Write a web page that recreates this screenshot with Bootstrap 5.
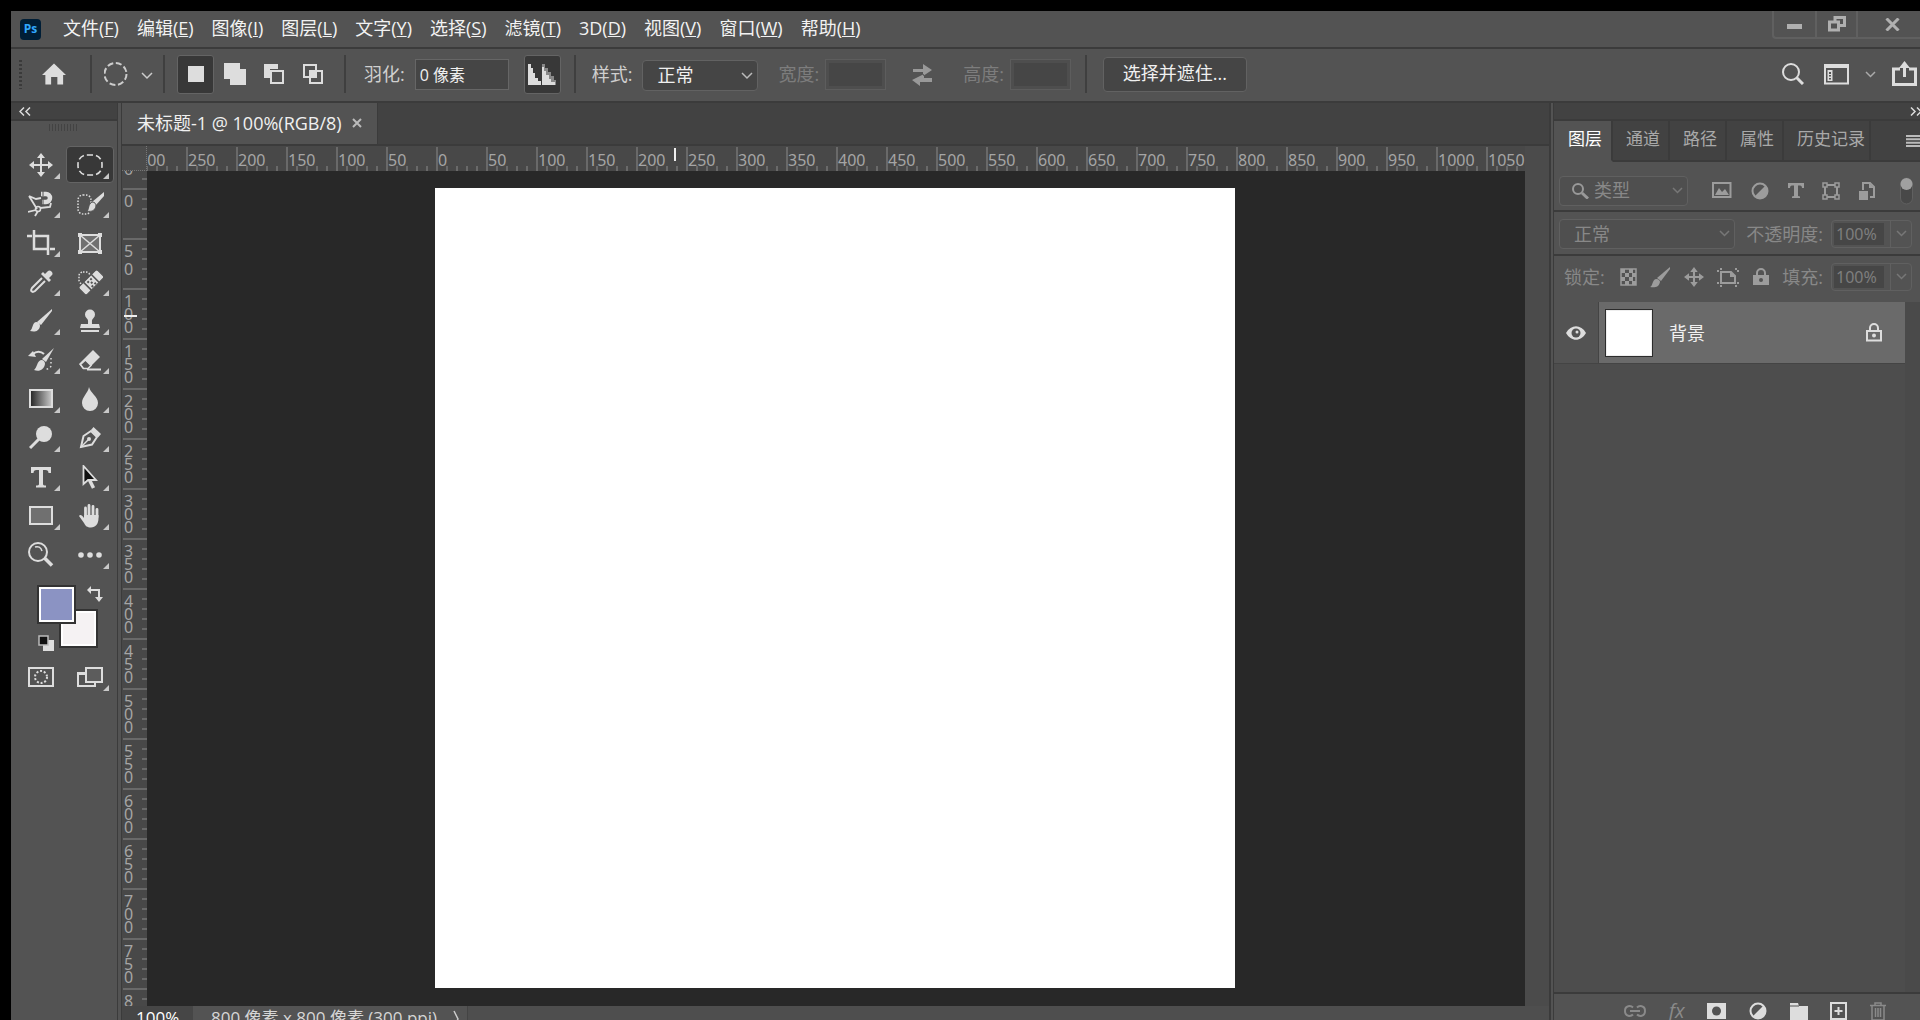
<!DOCTYPE html>
<html lang="zh-CN">
<head>
<meta charset="utf-8">
<meta name="viewport" content="width=device-width, initial-scale=1">
<title>未标题-1 @ 100%(RGB/8)</title>
<link href="https://cdn.jsdelivr.net/npm/bootstrap@5.3.0/dist/css/bootstrap.min.css" rel="stylesheet">
<script src="https://cdn.jsdelivr.net/npm/bootstrap@5.3.0/dist/js/bootstrap.bundle.min.js"></script>
<style>
:root{--panel:#535353;--well:#424242;--line:#3b3b3b;--edge:#666;--ink:#ddd;--dim:#888}
body{background:#000;color:#f0f0f0;font-family:"Open Sans","Noto Sans CJK SC",sans-serif;font-size:18px;line-height:24px;overflow:hidden}
svg{display:block;flex:none;fill:none;stroke:none}
button,input,select{font:inherit;color:inherit}
.tap{background:none;border:0;padding:0;display:flex;align-items:center;justify-content:center;color:inherit}
.app{height:calc(100vh + 12px);padding:11px 0 0 11px}
.shell{background:var(--panel)}
.menubar{height:38px;flex:none;border-bottom:2px solid var(--line)}
.menubar a{color:#f2f2f2;text-decoration:none;padding:0}
.menubar nav{gap:18px;margin-left:22px;padding-bottom:2px}
.pslogo{width:21px;height:21px;border-radius:4px;background:#001e36;color:#31a8ff;font:700 12px/20px "Open Sans",sans-serif;text-align:center;margin-left:9px}
.winbox{height:28px;border:2px solid #606060;border-width:0 0 2px 2px;border-radius:0 0 0 4px;color:#b0b0b0}
.winbox button+button{border-left:2px solid #606060}
.w-a{width:41px}.w-b{width:41px}.w-c{width:64px;padding-left:8px}
.optbar{height:54px;flex:none;border-bottom:2px solid var(--line);color:#cfcfcf;padding-bottom:2px}
.vrule{width:2px;height:38px;background:#3f3f3f;flex:none}
.vr-a{margin:0 18px 0 13px}
.vr-b{margin:0 16px 0 14px}
.alias{margin:0 13px 0 15px}
.swapwh{margin:0 31px 0 26px}
.grip{width:3px;height:29px;background:repeating-linear-gradient(#3a3a3a 0 2px,transparent 2px 4px);margin-left:8px}
.opt{width:37px;height:39px;border-radius:3px;border:1px solid transparent;color:var(--ink)}
.opt.on,.tool.on{background:#383838;border-color:#646464}
.optbar label{margin-right:10px}
.optbar label.faint{margin-right:6px}
.field{background:#454545;border:1px solid var(--edge);border-radius:0;height:31px;padding:0 4px;color:#f0f0f0;font-size:16px;min-width:0}
.field.off{border-color:#5d5d5d;background:#464646;box-shadow:inset 0 0 0 3px #4e4e4e}
.pick{position:relative;display:flex;align-items:center}
.pick select{appearance:none;width:100%;height:100%;background:#454545;border:1px solid #626262;border-radius:4px;color:inherit;padding:0 14px 1px;opacity:1}
.pick .chev{position:absolute;right:5px;pointer-events:none}
.faint{color:#7d7d7d}
.refine{width:144px;height:35px;background:#454545;border:1px solid #626262;border-radius:4px;color:#f0f0f0;padding:0 0 2px}
.toolcol{width:107px;border-right:1px solid var(--line);flex:none}
.cap{height:18px;flex:none;background:var(--well);border-bottom:2px solid var(--line);color:var(--ink)}
.toolgrid{display:grid;grid-template-columns:48px 48px;gap:2px 1px;padding:0 0 0 6px}
.tool{position:relative;height:37px;border-radius:4px;border:1px solid transparent;color:var(--ink)}
.tool.more::after{content:"";position:absolute;right:4px;bottom:3px;border:3px solid;border-color:transparent #c8c8c8 #c8c8c8 transparent}
.hgrip{height:7px;width:29px;margin:3px 0 15px 38px;background:repeating-linear-gradient(90deg,#434343 0 1px,transparent 1px 3px)}
.swatches{position:relative;width:61px;height:67px;margin:12px 0 0 26px}
.swatches>*{position:absolute}
.sw{width:39px;height:39px;padding:0;border:2px solid #333;box-shadow:inset 0 0 0 2px #fff}
.sw.front{left:0;top:0;background:#8b93c3}
.sw.back{left:22px;top:24px;background:#f5f2f3}
.masks{padding-top:6px}
.doccol{min-width:0;border:solid #3b3b3b;border-width:0 2px 0 1px;margin:0 2px 0 3px}
.doctabs{height:43px;flex:none;background:var(--well);border-bottom:2px solid var(--line)}
.doctab{background:var(--panel);border-right:1px solid var(--line);padding:0 15px 2px 15px;height:41px;width:256px}
.ruler{background:#484848;color:#a5a5a5;font:16px/16px "Noto Sans",sans-serif}
.hr-top{height:25px;flex:none;overflow:hidden;position:relative}
.corner{width:25px;flex:none;background:#4c4c4c;border-right:1px dotted #777;border-bottom:1px dotted #777}
.hstrip{overflow:hidden;position:relative;flex:1}
.hstrip .run{margin-left:-11px;width:1389px;overflow:hidden;height:25px}
.hcell{width:50px;flex:none;height:25px;padding:6px 0 0 2px;background:linear-gradient(#696969,#696969) 0 1px/2px 24px no-repeat,repeating-linear-gradient(90deg,#696969 0 2px,transparent 2px 10px) 0 20px/50px 5px no-repeat}
.vstrip{width:25px;flex:none;overflow:hidden;position:relative}
.vstrip .run{margin-top:-33px;margin-left:1px}
.vcell{height:50px;padding:7px 0 0 1px;background:linear-gradient(#696969,#696969) 0 0/24px 2px no-repeat,repeating-linear-gradient(#696969 0 2px,transparent 2px 10px) 19px 0/5px 50px no-repeat}
.vcell span{display:block;height:13px;line-height:13px}
.vcell.two{padding-top:4px}
.vcell.two span{height:18px;line-height:18px}
.hair{position:absolute;background:#eee}
.hair.x{left:552px;top:2px;width:2px;height:13px}
.hair.y{left:2px;top:144px;width:13px;height:2px}
.stage{background:#282828;overflow:hidden;min-width:0}
.artboard{width:800px;height:800px;background:#fff;margin:17px 0 0 288px}
.vscroll{width:24px;background:#4b4b4b;flex:none}
.status{height:26px;flex:none;background:#4e4e4e;font-size:17px}
.status .zoomv{width:71px;background:#464646;border:0;padding:0 0 2px 14px;color:#fff}
.status .info{width:275px;background:var(--panel);padding:0 8px 2px 18px;color:#d6d6d6;border-right:1px solid #444}
.side{width:367px;flex:none;border-left:1px solid var(--line)}
.ptabs{height:41px;flex:none;background:var(--well);color:#a9a9a9;font-size:17px}
.ptabs button{padding:0 8px 4px 13px;border-right:2px solid var(--line);border-bottom:2px solid var(--line);height:41px}
.ptabs button:last-of-type{padding-right:4px}
.ptabs .on{background:var(--panel);color:#fff;border-bottom-color:var(--panel);padding-left:14px;padding-right:9px}
.ptabs .rest{border-bottom:2px solid var(--line)}
.prow{color:var(--dim);flex:none}
.prow .pick select{background:#4f4f4f;border-color:#606060}
.prow.sep{border-bottom:2px solid var(--line)}
.r-filter{height:50px;padding:9px 7px 0 5px}
.r-blend{height:44px;padding:2px 8px 0 5px}
.r-lock{height:46px;padding:0 8px 4px 10px}
.kinds{width:163px;margin-left:24px}
.locks{width:149px;margin-left:15px}
.pct{width:81px;height:28px;border:1px solid #606060;border-radius:4px;padding:2px 0 2px 2px;display:flex}
.pct input{width:50px;background:#464646;border:0;padding:0 2px;font:16px/20px "Noto Sans",sans-serif;color:#7e7e7e;margin-right:6px}
.pct button{flex:1;border-left:1px solid #606060;margin:-2px 0}
.glyphs{color:#9c9c9c}
.layerrow{height:62px;border-bottom:1px solid #444}
.layerrow .eye{width:45px;border-right:1px solid #444;background:var(--panel)}
.lay{background:#6a6a6a;padding:0 23px 0 6px}
.thumb{width:48px;height:48px;background:#fff;border:1px solid #2c2c2c;box-shadow:inset 0 0 0 1px #eee}
.pscroll{width:15px;background:#4a4a4a}
.layers{background:#4d4d4d}
.pfoot{height:40px;flex:none;border-top:2px solid var(--line);color:var(--ink);padding:0 34px 4px 70px}
.fx{font:italic 20px/20px "Open Sans",sans-serif}
.soft{color:#8a8a8a}
</style>
</head>
<body>
<div class="app d-flex flex-column">
<div class="shell d-flex flex-column flex-grow-1" style="min-height:0">

<header class="menubar d-flex align-items-start">
  <div class="d-flex align-items-center h-100 flex-grow-1">
    <div class="pslogo">Ps</div>
    <nav class="d-flex">
      <a href="#">文件(<u>F</u>)</a><a href="#">编辑(<u>E</u>)</a><a href="#">图像(<u>I</u>)</a><a href="#">图层(<u>L</u>)</a><a href="#">文字(<u>Y</u>)</a><a href="#">选择(<u>S</u>)</a><a href="#">滤镜(<u>T</u>)</a><a href="#">3D(<u>D</u>)</a><a href="#">视图(<u>V</u>)</a><a href="#">窗口(<u>W</u>)</a><a href="#">帮助(<u>H</u>)</a>
    </nav>
  </div>
  <div class="winbox d-flex">
    <button class="tap w-a" aria-label="最小化"><svg width="16" height="14"><path d="M0 7h15v5H0z" fill="currentColor"/></svg></button>
    <button class="tap w-b" aria-label="还原"><svg width="18" height="16"><path d="M7 4.500V1.500h9.500v8H12M1.500 6h9v8h-9z" stroke="currentColor" stroke-width="3"/></svg></button>
    <button class="tap w-c" aria-label="关闭"><svg width="16" height="13"><path d="M1.500 0.500l12 12M13.500 0.500l-12 12" stroke="currentColor" stroke-width="3"/></svg></button>
  </div>
</header>

<section class="optbar d-flex align-items-center">
  <div class="grip"></div>
  <button class="tap ms-3 me-4" style="color:#ddd" aria-label="主页"><svg class="ms-1" width="24" height="22" viewBox="0 0 25 22"><path d="M12.500 0L25 12h-3v10h-6v-8H9.500v8H3.500V12H0z" fill="currentColor"/></svg></button>
  <div class="vrule"></div>
  <button class="tap ms-2 me-2" style="color:#ccc" aria-label="椭圆选框工具"><svg class="ms-1" width="51" height="24"><circle cx="11.500" cy="12" r="11" stroke="currentColor" stroke-width="2" stroke-dasharray="6 2.640"/><path d="M38 11l5 5 5-5" stroke="currentColor" stroke-width="1.500"/></svg></button>
  <div class="vrule me-2"></div>
  <div class="d-flex ms-1" style="gap:2px">
    <button class="tap opt on" aria-label="新选区"><svg width="16" height="16"><path d="M0 0h16v16H0z" fill="currentColor"/></svg></button>
    <button class="tap opt" aria-label="添加到选区"><svg width="22" height="22"><path d="M0 0h16v6h6v16H6v-6H0z" fill="currentColor"/></svg></button>
    <button class="tap opt" aria-label="从选区减去"><svg width="20" height="20"><path d="M0 0h14v5H6v9H0z" fill="currentColor"/><path d="M7 7h12v12H7z" stroke="currentColor" stroke-width="2"/></svg></button>
    <button class="tap opt" aria-label="与选区交叉"><svg width="20" height="20"><path d="M1 1h12v12H1zM7 7h12v12H7z" stroke="currentColor" stroke-width="2"/><path d="M7 7h6v6H7z" fill="currentColor"/></svg></button>
  </div>
  <div class="vrule vr-a"></div>
  <label for="feather">羽化:</label>
  <input id="feather" class="field" style="width:94px" value="0 像素">
  <button class="tap opt on alias" aria-label="消除锯齿"><svg width="28" height="22"><path d="M0 1h3v4h2v5h2v5h3v3h3v4H0z" fill="currentColor"/><path d="M14 1h3v4h3v4h3v4h3v4h2v5H14z" fill="#888"/><path d="M14 4h2v4h2v4h3v4h2v3h4v3H14z" fill="currentColor"/></svg></button>
  <div class="vrule me-3"></div>
  <label for="style">样式:</label>
  <div class="pick" style="width:116px;height:31px;color:#f0f0f0;margin-top:3px"><select id="style"><option>正常</option></select><svg class="chev" width="12" height="8"><path d="M1 1l5 5 5-5" stroke="#bbb" stroke-width="1.500"/></svg></div>
  <label for="wd" class="faint ms-3 ps-1">宽度:</label>
  <input id="wd" class="field off" style="width:61px" disabled>
  <button class="tap swapwh" aria-label="高度和宽度互换"><svg width="20" height="23"><path d="M1 6h10V1l9 6-9 6V9H1zM20 15h-8v-4L0 17l8 6v-4h12z" fill="#999"/></svg></button>
  <label for="ht" class="faint">高度:</label>
  <input id="ht" class="field off" style="width:61px" disabled>
  <div class="vrule vr-b"></div>
  <button class="refine">选择并遮住...</button>
  <div class="ms-auto d-flex align-items-center" style="color:#ddd;padding-right:3px">
    <button class="tap" aria-label="搜索"><svg width="22" height="22"><circle cx="9" cy="9" r="8" stroke="currentColor" stroke-width="2"/><path d="M14.500 14.500L21 21" stroke="currentColor" stroke-width="3"/></svg></button>
    <button class="tap" style="margin-left:20px" aria-label="工作区"><svg width="52" height="21"><path d="M1 1h23v18.500H1z" stroke="currentColor" stroke-width="2"/><path d="M1 0h23v4H1zM3.500 6h5v11h-5z" fill="currentColor"/><path d="M5 8h2v2H5zM5 11h2v1.500H5zM5 14h2v1.500H5z" fill="#535353"/><path d="M42 8l4.500 4.500L51 8" stroke="#aaa" stroke-width="1.500"/></svg></button>
    <button class="tap" style="margin-left:16px" aria-label="共享"><svg width="25" height="26"><path d="M8 8H1.500v15.500h22V8H17" stroke="currentColor" stroke-width="3"/><path d="M12.500 16V5" stroke="currentColor" stroke-width="3"/><path d="M7 7l5.500-7L18 7z" fill="currentColor"/></svg></button>
  </div>
</section>

<main class="d-flex flex-grow-1" style="min-height:0">

  <aside class="toolcol">
    <div class="cap d-flex align-items-center ps-2"><svg width="12" height="9"><path d="M5 0.500l-4 4 4 4M11 0.500l-4 4 4 4" stroke="currentColor" stroke-width="1.500"/></svg></div>
    <div class="hgrip"></div>
    <div class="toolgrid">
      <button class="tap tool more" aria-label="移动"><svg width="24" height="24"><path d="M12 3v18M3 12h18" stroke="currentColor" stroke-width="2"/><path d="M12 0l4 5H8zM12 24l4-5H8zM0 12l5-4v8zM24 12l-5-4v8z" fill="currentColor"/></svg></button>
      <button class="tap tool more on" aria-label="椭圆选框"><svg width="26" height="22"><rect x="1" y="1" width="24" height="20" rx="9" stroke="currentColor" stroke-width="1.600" stroke-dasharray="6 3"/></svg></button>
      <button class="tap tool more" aria-label="磁性套索"><svg width="26" height="26"><path d="M1 5l8 13M1 5l7 3 5-1M12 17l10-1 1-4M8 19l-8 2M10 20l-3 5" stroke="currentColor" stroke-width="1.800"/><circle cx="10" cy="18" r="2.500" stroke="currentColor" stroke-width="1.500"/><path d="M13 3h5a4 4 0 010 8h-4" stroke="currentColor" stroke-width="4.500"/><path d="M15 0v5M15 8v6" stroke="#535353" stroke-width="1"/></svg></button>
      <button class="tap tool more" aria-label="快速选择"><svg width="28" height="24"><rect x="2" y="3" width="13" height="19" rx="5" stroke="currentColor" stroke-width="1.500" stroke-dasharray="1.500 1.500"/><path d="M28 0v4l-8 9-4-3z" fill="currentColor"/><path d="M16 10c3 0 4 2 4 4-1 5-5 6-9 5 2-1 1-7 5-9z" fill="currentColor" stroke="#535353"/></svg></button>
      <button class="tap tool more" aria-label="裁剪"><svg width="28" height="26"><path d="M0 6h5M8 6h13v19M7 0v19h14M23 19h5" stroke="currentColor" stroke-width="2.500"/></svg></button>
      <button class="tap tool" aria-label="图框"><svg width="26" height="22"><path d="M3 3h20v17H3z" fill="#707070" stroke="currentColor" stroke-width="2"/><path d="M3 3l20 17M23 3L3 20" stroke="currentColor" stroke-width="1.500"/><path d="M1 1h4v4H1zM21 1h4v4h-4zM1 18h4v4H1zM21 18h4v4h-4z" fill="currentColor"/></svg></button>
      <button class="tap tool more" aria-label="吸管"><svg width="24" height="24"><path d="M13 8L3 18c-2 3 0 5 3 3L16 11" stroke="currentColor" stroke-width="2"/><path d="M12 4l8 8 2-2-2-2 3-3c2-2-2-6-4-4l-3 3-2-2z" fill="currentColor"/></svg></button>
      <button class="tap tool more" aria-label="修复画笔"><svg width="26" height="26"><rect x="2" y="3" width="11" height="12" rx="4" stroke="currentColor" stroke-width="1.500" stroke-dasharray="1.500 1.500"/><g transform="rotate(-45 14 13)"><rect x="1" y="8" width="26" height="11" rx="2" fill="currentColor" stroke="#535353"/><path d="M8.500 8v11M19.500 8v11" stroke="#535353" stroke-width="1.500"/><path d="M11 10h2v2h-2zM15 10h2v2h-2zM13 13h2v2h-2zM11 16h2v2h-2zM15 16h2v2h-2z" fill="#535353"/></g></svg></button>
      <button class="tap tool more" aria-label="画笔"><svg width="24" height="24"><path d="M23 0v2L12 16l-4-3z" fill="currentColor"/><path d="M7 13c3 0 4 2 4 4-1 6-6 6-10 5 3-2 2-8 6-9z" fill="currentColor"/></svg></button>
      <button class="tap tool more" aria-label="仿制图章"><svg width="22" height="24"><path d="M7.500 9a5 5 0 117 0c-2 2-1.500 3-1.500 6h7l1 4H1l1-4h7c0-3 .5-4-1.500-6zM2 21h18v2H2z" fill="currentColor"/></svg></button>
      <button class="tap tool more" aria-label="历史记录画笔"><svg width="26" height="24"><path d="M26 0l-8 14-4-3z" fill="currentColor"/><path d="M13 12c3 0 4 2 4 4-1 6-6 8-11 6 3-2 3-9 7-10z" fill="currentColor"/><path d="M5 6c3-3 8-3 11 0" stroke="currentColor" stroke-width="2"/><path d="M0 8l5-5 3 6z" fill="currentColor"/><path d="M23 10v8c-1 3-4 3-5 3" stroke="currentColor" stroke-width="1.500" stroke-dasharray="1.500 2.500"/></svg></button>
      <button class="tap tool more" aria-label="橡皮擦"><svg width="24" height="22"><path d="M15 1l7 7-12 12H5l-4-5z" fill="currentColor"/><path d="M7.500 11l5.500 5.500-3 3H5.500L2.500 15.500z" fill="#535353" stroke="currentColor" stroke-width="1.500"/><path d="M9 20.500h14" stroke="currentColor" stroke-width="2"/></svg></button>
      <button class="tap tool more" aria-label="渐变"><svg width="24" height="20"><defs><linearGradient id="gr"><stop offset="0" stop-color="#222"/><stop offset="1" stop-color="#ccc"/></linearGradient></defs><rect x="1" y="1" width="22" height="17" fill="url(#gr)" stroke="currentColor" stroke-width="2"/></svg></button>
      <button class="tap tool more" aria-label="模糊"><svg width="18" height="24"><path d="M8 0c1 6 9 9 9 16a8 8 0 01-16 0C1 10 7 6 8 0z" fill="currentColor"/></svg></button>
      <button class="tap tool more" aria-label="减淡"><svg width="24" height="24"><circle cx="15" cy="8" r="8" fill="currentColor"/><path d="M11 12L1 22" stroke="currentColor" stroke-width="3"/></svg></button>
      <button class="tap tool more" aria-label="钢笔"><svg width="22" height="22"><path d="M2 20L4.500 9 12 4l6 6-5 7.500z" stroke="currentColor" stroke-width="2"/><path d="M12 3l2.500-3L22 7l-3 3.500z" fill="currentColor"/><circle cx="10" cy="12" r="2" fill="currentColor"/><path d="M2 20l7-7" stroke="currentColor" stroke-width="1.500"/></svg></button>
      <button class="tap tool more" aria-label="文字"><svg width="22" height="22"><path d="M1 1h20v6h-2.500c0-2-1-3-3-3H13v14c0 1 1 1.500 3 1.500v2H6v-2c2 0 3-.5 3-1.500V4H6.500c-2 0-3 1-3 3H1z" fill="currentColor"/></svg></button>
      <button class="tap tool more" aria-label="路径选择"><svg width="16" height="24"><path d="M1.500 1v18l4.500-4h8z" fill="#111" stroke="currentColor" stroke-width="1.800"/><path d="M7.500 15l4 8" stroke="currentColor" stroke-width="3.500"/></svg></button>
      <button class="tap tool more" aria-label="矩形"><svg width="24" height="20"><path d="M1 1h22v17H1z" fill="#707070" stroke="currentColor" stroke-width="2"/></svg></button>
      <button class="tap tool more" aria-label="抓手"><svg width="22" height="24"><path d="M6.500 13V4M10 12V1.500M14 12V2.500M18 13V5.500" stroke="currentColor" stroke-width="2.800" stroke-linecap="round"/><path d="M5 11h14.500v3c0 6-3 9.500-7.500 9.500-4 0-5.500-1.500-7-4.500L0 12c1-2 3-1 5 2z" fill="currentColor"/></svg></button>
      <button class="tap tool" aria-label="缩放"><svg width="26" height="25"><circle cx="10" cy="10" r="9" stroke="currentColor" stroke-width="2"/><path d="M7 5c3-1 6 0 7 4" stroke="currentColor" stroke-width="1.500"/><path d="M16.500 16l7.500 7.500" stroke="currentColor" stroke-width="3.500"/></svg></button>
      <button class="tap tool more" aria-label="编辑工具栏"><svg width="24" height="6"><circle cx="3" cy="3" r="2.800" fill="currentColor"/><circle cx="12" cy="3" r="2.800" fill="currentColor"/><circle cx="21" cy="3" r="2.800" fill="currentColor"/></svg></button>
    </div>
    <div class="swatches">
      <button class="sw back" aria-label="背景色"></button>
      <button class="sw front" aria-label="前景色"></button>
      <svg style="right:-5px;top:1px" width="16" height="16"><path d="M4 4h8v8" stroke="#ddd" stroke-width="2"/><path d="M0 4l4-4v8zM12 16l-4-5h8z" fill="#ddd"/></svg>
      <svg style="left:1px;bottom:0" width="17" height="17"><path d="M5 5h11v11H5z" fill="#ddd"/><path d="M1 1h9v9H1z" fill="#111" stroke="#bbb" stroke-width="1.500"/></svg>
    </div>
    <div class="toolgrid masks">
      <button class="tap tool" aria-label="快速蒙版"><svg width="26" height="20"><path d="M1 1h24v18H1z" stroke="currentColor" stroke-width="2"/><circle cx="13" cy="10" r="6" stroke="currentColor" stroke-width="2" stroke-dasharray="2 1.800"/></svg></button>
      <button class="tap tool more" aria-label="屏幕模式"><svg width="26" height="20"><path d="M8 6H1v13h17v-4" stroke="currentColor" stroke-width="2"/><path d="M0 5h8v3H0z" fill="currentColor"/><path d="M9 1h16v14H9z" fill="#5c5c5c" stroke="currentColor" stroke-width="2"/></svg></button>
    </div>
  </aside>

  <section class="doccol d-flex flex-column flex-grow-1">
    <div class="doctabs d-flex">
      <div class="doctab d-flex align-items-center justify-content-between text-nowrap"><span>未标题-1 @ 100%(RGB/8)</span><button class="tap" aria-label="关闭文档"><svg width="10" height="10"><path d="M1 1l8 8M9 1L1 9" stroke="#bbb" stroke-width="2"/></svg></button></div>
    </div>
    <div class="d-flex flex-grow-1" style="min-height:0">
      <div class="d-flex flex-column flex-grow-1" style="min-width:0">
        <div class="ruler hr-top d-flex"><div class="corner"></div><div class="hstrip"><div class="run d-flex" id="hrun"></div></div><div class="hair x"></div></div>
        <div class="d-flex flex-grow-1" style="min-height:0">
          <div class="ruler vstrip"><div class="run" id="vrun"></div><div class="hair y"></div></div>
          <div class="stage flex-grow-1"><div class="artboard"></div></div>
        </div>
      </div>
      <div class="vscroll"></div>
    </div>
    <div class="status d-flex align-items-stretch">
      <input class="zoomv" value="100%" aria-label="缩放比例">
      <div class="info d-flex align-items-center justify-content-between"><span>800 像素 x 800 像素 (300 ppi)</span><svg width="6" height="16"><path d="M1 1l4 8-4 7" stroke="#ccc" stroke-width="1.500"/></svg></div>
    </div>
  </section>

  <aside class="side d-flex flex-column">
    <div class="cap d-flex align-items-center justify-content-end"><svg width="10" height="9"><path d="M1 0.500l4 4-4 4M7 0.500l4 4-4 4" stroke="currentColor" stroke-width="1.500"/></svg></div>
    <div class="ptabs d-flex text-nowrap">
      <button class="tap on">图层</button><button class="tap">通道</button><button class="tap">路径</button><button class="tap">属性</button><button class="tap">历史记录</button>
      <div class="rest flex-grow-1 d-flex align-items-center justify-content-end"><svg width="14" height="12"><path d="M0 1h14M0 4.330h14M0 7.660h14M0 11h14" stroke="#bbb" stroke-width="2"/></svg></div>
    </div>
    <div class="prow sep r-filter d-flex align-items-center">
      <div class="pick" style="width:129px;height:30px"><svg style="position:absolute;left:13px" width="17" height="16"><circle cx="6" cy="6" r="5" stroke="#999" stroke-width="2"/><path d="M10 10l6 5.500" stroke="#999" stroke-width="3"/></svg><select style="padding-left:34px" aria-label="图层过滤"><option>类型</option></select><svg class="chev" width="11" height="8"><path d="M1 1l4.500 4.500L10 1" stroke="#777" stroke-width="1.500"/></svg></div>
      <div class="glyphs kinds d-flex align-items-center justify-content-between">
        <button class="tap" aria-label="像素图层"><svg width="20" height="17"><path d="M1 1h17.500v14H1z" stroke="currentColor" stroke-width="2"/><path d="M3 13l4-7 3 4 3-3 4 6z" fill="currentColor"/></svg></button>
        <button class="tap" aria-label="调整图层"><svg width="18" height="18"><circle cx="9" cy="9" r="7.500" stroke="currentColor" stroke-width="2"/><path d="M14.500 3.500a7.500 7.500 0 01-11 11z" fill="currentColor"/></svg></button>
        <button class="tap" aria-label="文字图层"><svg width="16" height="17"><path d="M0 1h16v5h-2c0-2-1-2.500-3-2.500H10V14l2 .5V16H4v-1.500l2-.5V3.500H5C3 3.500 2 4 2 6H0z" fill="currentColor"/></svg></button>
        <button class="tap" aria-label="形状图层"><svg width="18" height="18"><path d="M3 3h12v12H3z" stroke="currentColor" stroke-width="2"/><path d="M1 1h4v4H1zM13 1h4v4h-4zM1 13h4v4H1zM13 13h4v4h-4z" fill="#535353" stroke="currentColor" stroke-width="1.500"/></svg></button>
        <button class="tap" aria-label="智能对象"><svg width="16" height="18"><path d="M4 8V1h7l4 4v10h-4" stroke="currentColor" stroke-width="2"/><path d="M10 1v5h5M0 9h9v9H0z" fill="currentColor"/></svg></button>
      </div>
      <button class="tap ms-auto" aria-label="过滤开关"><svg width="13" height="28"><rect x="0.500" y="1" width="12" height="26" rx="6" fill="#484848" stroke="#606060"/><circle cx="6.500" cy="7" r="6" fill="#a0a0a0"/></svg></button>
    </div>
    <div class="prow sep r-blend d-flex align-items-center">
      <div class="pick" style="width:176px;height:30px"><select aria-label="混合模式"><option>正常</option></select><svg class="chev" width="11" height="8"><path d="M1 1l4.500 4.500L10 1" stroke="#777" stroke-width="1.500"/></svg></div>
      <label for="op" class="ms-auto me-2">不透明度:</label>
      <div class="pct"><input id="op" value="100%"><button class="tap" aria-label="不透明度滑块"><svg width="11" height="8"><path d="M1 1l4.500 4.500L10 1" stroke="#777" stroke-width="1.500"/></svg></button></div>
    </div>
    <div class="prow r-lock d-flex align-items-center">
      <span>锁定:</span>
      <div class="glyphs locks d-flex align-items-center justify-content-between">
        <button class="tap" aria-label="锁定透明像素"><svg width="17" height="18"><path d="M1 1h15v16H1z" stroke="currentColor" stroke-width="1.500"/><path d="M1 1h4v4H1zM9 1h4v4H9zM5 5h4v4H5zM12 5h4v4h-4zM1 9h4v4H1zM9 9h4v4H9zM5 13h4v4H5zM12 13h4v4h-4z" fill="currentColor"/></svg></button>
        <button class="tap" aria-label="锁定图像像素"><svg width="20" height="21"><path d="M20 0v2l-9 12-4-3z" fill="currentColor"/><path d="M6 12c3 0 4 2 4 3-1 5-5 6-10 5 3-1 2-7 6-8z" fill="currentColor"/></svg></button>
        <button class="tap" aria-label="锁定位置"><svg width="20" height="20" viewBox="0 0 24 24"><path d="M12 3v18M3 12h18" stroke="currentColor" stroke-width="2.500"/><path d="M12 0l4.500 6h-9zM12 24l4.500-6h-9zM0 12l6-4.500v9zM24 12l-6-4.500v9z" fill="currentColor"/></svg></button>
        <button class="tap" aria-label="防止嵌套"><svg width="22" height="19"><path d="M4 4h10l4 4v7H4z" stroke="currentColor" stroke-width="2"/><path d="M13 3v6h6M0 2h2v2H0zM3 0h2v2H3zM18 0h2v2h-2zM20 2h2v2h-2zM0 14h2v2H0zM3 17h2v2H3zM18 17h2v2h-2zM20 14h2v2h-2z" fill="currentColor"/></svg></button>
        <button class="tap" aria-label="锁定全部"><svg width="16" height="18"><path d="M4 8V5a4 4 0 018 0v3" stroke="currentColor" stroke-width="2"/><path d="M0 7h16v10H0z" fill="currentColor"/><circle cx="8" cy="12" r="2" fill="#535353"/></svg></button>
      </div>
      <label for="fl" class="ms-auto me-2">填充:</label>
      <div class="pct"><input id="fl" value="100%"><button class="tap" aria-label="填充滑块"><svg width="11" height="8"><path d="M1 1l4.500 4.500L10 1" stroke="#777" stroke-width="1.500"/></svg></button></div>
    </div>
    <div class="layers d-flex flex-grow-1">
      <div class="flex-grow-1">
        <div class="layerrow d-flex">
          <button class="tap eye" aria-label="图层可见性"><svg width="20" height="14"><path d="M0 7c5-9 15-9 20 0-5 9-15 9-20 0z" fill="#ddd"/><circle cx="10" cy="7" r="4.500" fill="#535353"/><circle cx="11" cy="6" r="1.500" fill="#ddd"/></svg></button>
          <div class="lay d-flex align-items-center flex-grow-1"><div class="thumb me-3"></div><span>背景</span><svg class="ms-auto" width="16" height="19"><path d="M4 8V5a4 4 0 018 0v3M1 8h14v9.500H1z" stroke="#ddd" stroke-width="2"/><circle cx="8" cy="12.500" r="2" fill="#ddd"/></svg></div>
        </div>
      </div>
      <div class="pscroll"></div>
    </div>
    <div class="pfoot d-flex align-items-center justify-content-between">
      <button class="tap soft" aria-label="链接图层"><svg width="22" height="12"><path d="M9 2.500C7 .5 1 0 1 6s6 5.500 8 3.500M13 2.500C15 .5 21 0 21 6s-6 5.500-8 3.500M6 6h10" stroke="currentColor" stroke-width="2"/></svg></button>
      <button class="tap soft fx">fx</button>
      <button class="tap" aria-label="添加蒙版"><svg width="19" height="16"><path d="M0 0h19v16H0z" fill="currentColor"/><circle cx="9.500" cy="8" r="4.500" fill="#535353"/></svg></button>
      <button class="tap" aria-label="新建调整图层"><svg width="18" height="18"><circle cx="9" cy="9" r="7.500" stroke="currentColor" stroke-width="2"/><path d="M14.500 3.500a7.500 7.500 0 01-11 11z" fill="currentColor"/></svg></button>
      <button class="tap" aria-label="新建组"><svg width="18" height="17"><path d="M0 0h8l1 3h9v14H0z" fill="currentColor"/><path d="M0 3h9" stroke="#535353"/></svg></button>
      <button class="tap" aria-label="新建图层"><svg width="17" height="18"><path d="M1 1h15v16H1z" stroke="currentColor" stroke-width="2"/><path d="M8.500 5v8M4.500 9h8" stroke="currentColor" stroke-width="2"/></svg></button>
      <button class="tap soft" aria-label="删除图层"><svg width="16" height="19"><path d="M0 3.500h16M5 3V1h6v2M2 4v14h12V4M5.500 6v9M8 6v9M10.500 6v9" stroke="currentColor" stroke-width="1.500"/></svg></button>
    </div>
  </aside>
</main>
</div>
</div>
<script>
// Ruler cells: one per 50 document pixels
const h = document.getElementById('hrun'), v = document.getElementById('vrun');
for (let n = -300; n <= 1050; n += 50) {
  const c = document.createElement('div');
  c.className = 'hcell';
  c.textContent = Math.abs(n);
  h.append(c);
}
for (let n = -50; n <= 800; n += 50) {
  const c = document.createElement('div'), s = String(Math.abs(n));
  c.className = 'vcell' + (s.length < 3 ? ' two' : '');
  for (const d of s) {
    const e = document.createElement('span');
    e.textContent = d;
    c.append(e);
  }
  v.append(c);
}
</script>
</body>
</html>
